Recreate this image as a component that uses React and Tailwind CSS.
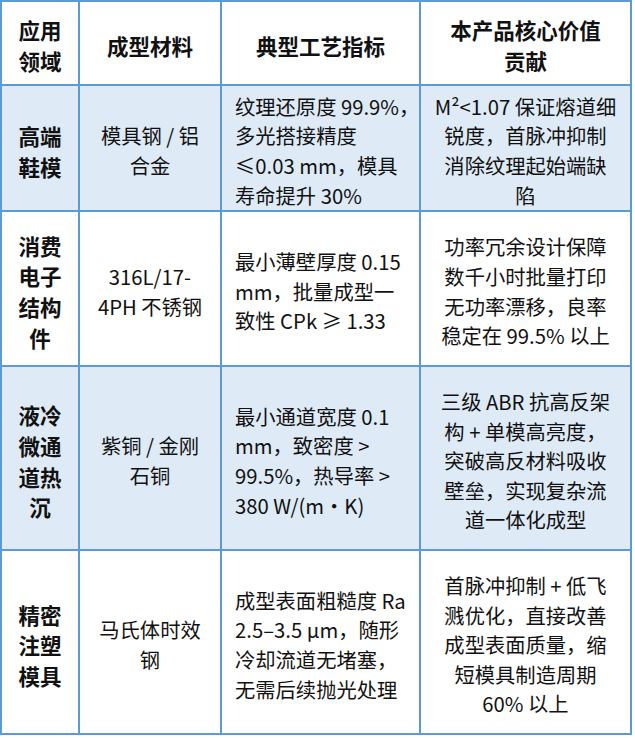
import React from "react";

const header = [["应用", "领域"], ["成型材料"], ["典型工艺指标"], ["本产品核心价值", "贡献"]];

const rows = [
  {
    bg: "bg-[#deeaf6]",
    area: ["高端", "鞋模"],
    material: ["模具钢 / 铝", "合金"],
    spec: ["纹理还原度 99.9%，", "多光搭接精度", "≤0.03 mm，模具", "寿命提升 30%"],
    value: ["M²<1.07 保证熔道细", "锐度，首脉冲抑制", "消除纹理起始端缺", "陷"],
  },
  {
    bg: "bg-white",
    area: ["消费", "电子", "结构", "件"],
    material: ["316L/17-", "4PH 不锈钢"],
    spec: ["最小薄壁厚度 0.15", "mm，批量成型一", "致性 CPk ≥ 1.33"],
    value: ["功率冗余设计保障", "数千小时批量打印", "无功率漂移，良率", "稳定在 99.5% 以上"],
  },
  {
    bg: "bg-[#deeaf6]",
    area: ["液冷", "微通", "道热", "沉"],
    material: ["紫铜 / 金刚", "石铜"],
    spec: ["最小通道宽度 0.1", "mm，致密度 >", "99.5%，热导率 >", "380 W/(m・K)"],
    value: ["三级 ABR 抗高反架", "构 + 单模高亮度，", "突破高反材料吸收", "壁垒，实现复杂流", "道一体化成型"],
  },
  {
    bg: "bg-white",
    area: ["精密", "注塑", "模具"],
    material: ["马氏体时效", "钢"],
    spec: ["成型表面粗糙度 Ra", "2.5–3.5 μm，随形", "冷却流道无堵塞，", "无需后续抛光处理"],
    value: ["首脉冲抑制 + 低飞", "溅优化，直接改善", "成型表面质量，缩", "短模具制造周期", "60% 以上"],
  },
];

const Lines = ({ lines }) =>
  lines.map((l, i) => (
    <span key={i} className="block whitespace-nowrap">
      {l}
    </span>
  ));

export default function App() {
  return (
    <div
      className="w-[635px] h-[738px] bg-white text-[#111]"
      style={{ fontFamily: '"Noto Sans CJK SC", "Noto Sans", sans-serif' }}
    >
      <div className="grid w-[632px] grid-cols-[76px_140px_197px_209px] grid-rows-[82px_124px_153px_182px_182px] gap-[2px] bg-[#5b9bd5] p-[2px]">
        {header.map((h, i) => (
          <div
            key={i}
            className="flex flex-col items-center justify-center bg-white pt-[6px] text-center text-[21.5px] font-bold leading-[30.6px]"
          >
            <Lines lines={h} />
          </div>
        ))}

        {rows.map((r, i) => (
          <React.Fragment key={i}>
            <div className={`${r.bg} flex flex-col items-center justify-center pt-[7px] text-center text-[21.5px] font-bold leading-[30.6px]`}>
              <Lines lines={r.area} />
            </div>
            <div className={`${r.bg} flex flex-col items-center justify-center pt-[6px] text-center text-[20.3px] leading-[29.6px]`}>
              <Lines lines={r.material} />
            </div>
            <div className={`${r.bg} flex flex-col justify-center pl-[13px] pt-[6px] text-left text-[20.3px] leading-[29.6px]`}>
              <Lines lines={r.spec} />
            </div>
            <div className={`${r.bg} flex flex-col items-center justify-center pt-[6px] text-center text-[20.3px] leading-[29.6px]`}>
              <Lines lines={r.value} />
            </div>
          </React.Fragment>
        ))}
      </div>
    </div>
  );
}
